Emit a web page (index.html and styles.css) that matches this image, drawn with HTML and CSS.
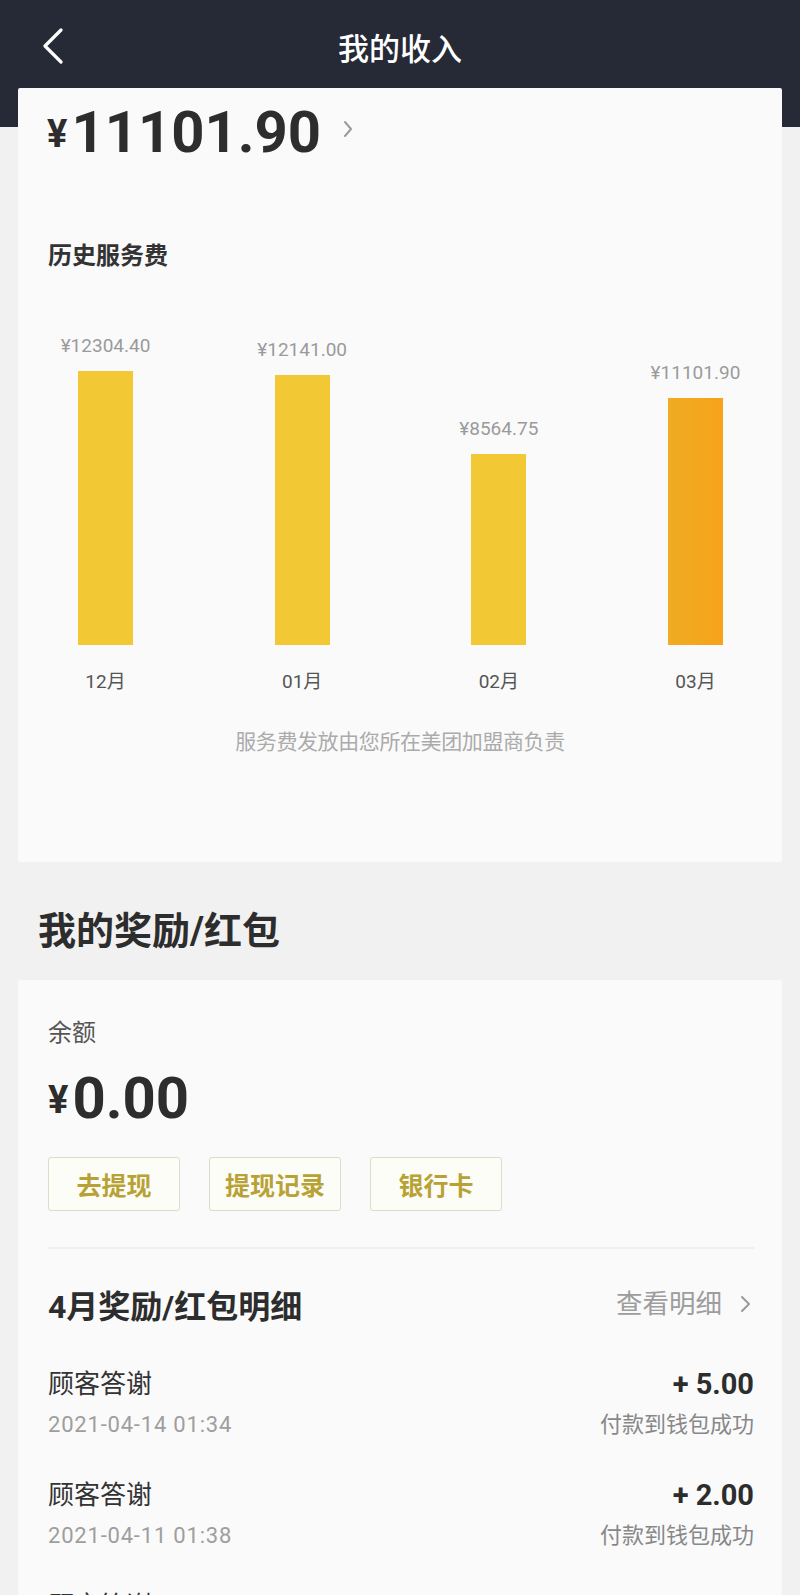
FILE: index.html
```html
<!DOCTYPE html>
<html lang="zh-CN">
<head>
<meta charset="utf-8">
<title>我的收入</title>
<link rel="stylesheet" href="styles.css">
</head>
<body>
<header class="topbar">
  <svg class="back" width="24" height="36" viewBox="0 0 24 36"><path d="M20 2 L4 18 L20 34" fill="none" stroke="#fff" stroke-width="3.2" stroke-linecap="round" stroke-linejoin="round"/></svg>
  <h1 class="title">我的收入</h1>
  <span class="spacer"></span>
</header>
<main class="page">
  <section class="card income">
    <div class="total">
      <span class="yen">¥</span><span class="num">11101.90</span>
      <svg class="more" width="10" height="18" viewBox="0 0 10 18"><path d="M2 2 L8 9 L2 16" fill="none" stroke="#9a9a9a" stroke-width="2" stroke-linecap="round" stroke-linejoin="round"/></svg>
    </div>
    <h2 class="sub">历史服务费</h2>
    <div class="chart">
      <div class="col"><span class="val">¥12304.40</span><div class="bar" style="height:274px"></div></div>
      <div class="col"><span class="val">¥12141.00</span><div class="bar" style="height:270px"></div></div>
      <div class="col"><span class="val">¥8564.75</span><div class="bar" style="height:191px"></div></div>
      <div class="col"><span class="val">¥11101.90</span><div class="bar bar-current" style="height:247px"></div></div>
    </div>
    <div class="months">
      <span>12月</span><span>01月</span><span>02月</span><span>03月</span>
    </div>
    <p class="note">服务费发放由您所在美团加盟商负责</p>
  </section>

  <h2 class="section-title">我的奖励/红包</h2>

  <section class="card reward">
    <div class="label">余额</div>
    <div class="balance"><span class="yen">¥</span><span class="num">0.00</span></div>
    <div class="actions">
      <button class="btn">去提现</button>
      <button class="btn">提现记录</button>
      <button class="btn">银行卡</button>
    </div>
    <div class="divider"></div>
    <div class="detail-head">
      <h3 class="detail-title">4月奖励/红包明细</h3>
      <a class="detail-link">查看明细<svg width="14" height="18" viewBox="0 0 14 18"><path d="M4 2 L11 9 L4 16" fill="none" stroke="#9a9a9a" stroke-width="2" stroke-linecap="round" stroke-linejoin="round"/></svg></a>
    </div>
    <ul class="records">
      <li class="record">
        <div class="rec-left"><span class="rec-name">顾客答谢</span><span class="rec-date">2021-04-14 01:34</span></div>
        <div class="rec-right"><span class="rec-amount">+ 5.00</span><span class="rec-status">付款到钱包成功</span></div>
      </li>
      <li class="record">
        <div class="rec-left"><span class="rec-name">顾客答谢</span><span class="rec-date">2021-04-11 01:38</span></div>
        <div class="rec-right"><span class="rec-amount">+ 2.00</span><span class="rec-status">付款到钱包成功</span></div>
      </li>
      <li class="record">
        <div class="rec-left"><span class="rec-name">顾客答谢</span><span class="rec-date">2021-04-08 01:20</span></div>
        <div class="rec-right"><span class="rec-amount">+ 3.00</span><span class="rec-status">付款到钱包成功</span></div>
      </li>
    </ul>
  </section>
</main>
</body>
</html>
```

FILE: styles.css
```css
* { box-sizing: border-box; }
html, body { margin: 0; padding: 0; }
body {
  background: #f1f1f1;
  font-family: Roboto, "Noto Sans CJK SC", sans-serif;
  color: #333;
}
.topbar {
  height: 127px;
  background: #262a37;
  display: grid;
  grid-template-columns: 80px 1fr 80px;
  align-items: start;
  padding-top: 27px;
}
.back {
  margin-left: 41px;
  margin-top: 1px;
}
.title {
  margin: 0;
  text-align: center;
  font-size: 31px;
  line-height: 40px;
  font-weight: 500;
  color: #fff;
  font-family: "Noto Sans CJK SC", sans-serif;
}
.page {
  margin-top: -39px;
  padding: 0 18px;
}
.card {
  background: #fafafa;
  border-radius: 2px;
}
.income {
  padding: 15px 0 105px;
}
.total {
  padding-left: 29px;
  display: flex;
  align-items: baseline;
  height: 58px;
}
.total .yen, .balance .yen {
  font-size: 38px;
  font-weight: 700;
  color: #2d2d2d;
  margin-right: 4px;
  transform: translateY(-5px);
}
.total .num, .balance .num {
  font-size: 58px;
  line-height: 58px;
  font-weight: 700;
  color: #2d2d2d;
}
.total .more {
  margin-left: 22px;
  align-self: center;
  margin-top: -6px;
}
.sub {
  margin: 83px 0 0 30px;
  font-size: 24px;
  line-height: 24px;
  font-weight: 700;
  color: #333;
}
.chart {
  margin-top: 57px;
  height: 320px;
  display: grid;
  grid-template-columns: repeat(4, 150px);
  column-gap: 46.67px;
  padding-left: 12.5px;
  align-items: end;
}
.col {
  display: flex;
  flex-direction: column;
  align-items: center;
  justify-content: flex-end;
}
.val {
  font-size: 19px;
  line-height: 24px;
  color: #9a9a9a;
  margin-bottom: 13px;
}
.bar {
  width: 55px;
  background: #f2c934;
}
.bar-current {
  background: linear-gradient(90deg, #efac22, #f7a21a);
}
.months {
  margin-top: 25px;
  display: grid;
  grid-template-columns: repeat(4, 150px);
  column-gap: 46.67px;
  padding-left: 12.5px;
}
.months span {
  text-align: center;
  font-size: 19px;
  line-height: 24px;
  color: #555;
}
.note {
  margin: 33px 0 0;
  text-align: center;
  font-size: 21px;
  line-height: 30px;
  letter-spacing: -0.4px;
  color: #ababab;
}
.section-title {
  margin: 44px 0 24px 20px;
  font-size: 38px;
  line-height: 50px;
  font-weight: 700;
  color: #2d2d2d;
}
.reward {
  padding: 37px 28px 40px 30px;
}
.label {
  font-size: 24px;
  line-height: 32px;
  color: #555;
}
.balance {
  margin-top: 20px;
  display: flex;
  align-items: baseline;
  height: 58px;
}
.actions {
  margin-top: 30px;
  display: flex;
  gap: 29px;
}
.btn {
  width: 132px;
  height: 54px;
  border: 1px solid #dedbcb;
  border-radius: 3px;
  background: #fdfdf8;
  font-family: "Noto Sans CJK SC", sans-serif;
  font-size: 25px;
  font-weight: 700;
  color: #b8a235;
  padding: 0;
}
.divider {
  margin-top: 36px;
  border-top: 2px solid #efefef;
}
.detail-head {
  margin-top: 38px;
  display: flex;
  justify-content: space-between;
  align-items: center;
}
.detail-title {
  margin: 0;
  font-size: 32px;
  line-height: 40px;
  font-weight: 700;
  color: #2d2d2d;
}
.detail-link {
  display: flex;
  align-items: center;
  gap: 16px;
  font-size: 26.5px;
  line-height: 32px;
  color: #9d9d9d;
  margin-right: 2px;
  margin-top: -6px;
}
.records {
  list-style: none;
  margin: 40px 0 0;
  padding: 0;
  display: flex;
  flex-direction: column;
  gap: 38px;
}
.record {
  display: flex;
  justify-content: space-between;
}
.rec-left, .rec-right {
  display: flex;
  flex-direction: column;
  gap: 9px;
}
.rec-right { align-items: flex-end; }
.rec-name {
  font-size: 26px;
  line-height: 34px;
  color: #333;
}
.rec-amount {
  font-size: 29px;
  line-height: 34px;
  font-weight: 700;
  color: #2d2d2d;
}
.rec-date {
  font-size: 22px;
  line-height: 30px;
  color: #9e9e9e;
  letter-spacing: 0.8px;
}
.rec-status {
  font-size: 22px;
  line-height: 30px;
  color: #888;
}
```
